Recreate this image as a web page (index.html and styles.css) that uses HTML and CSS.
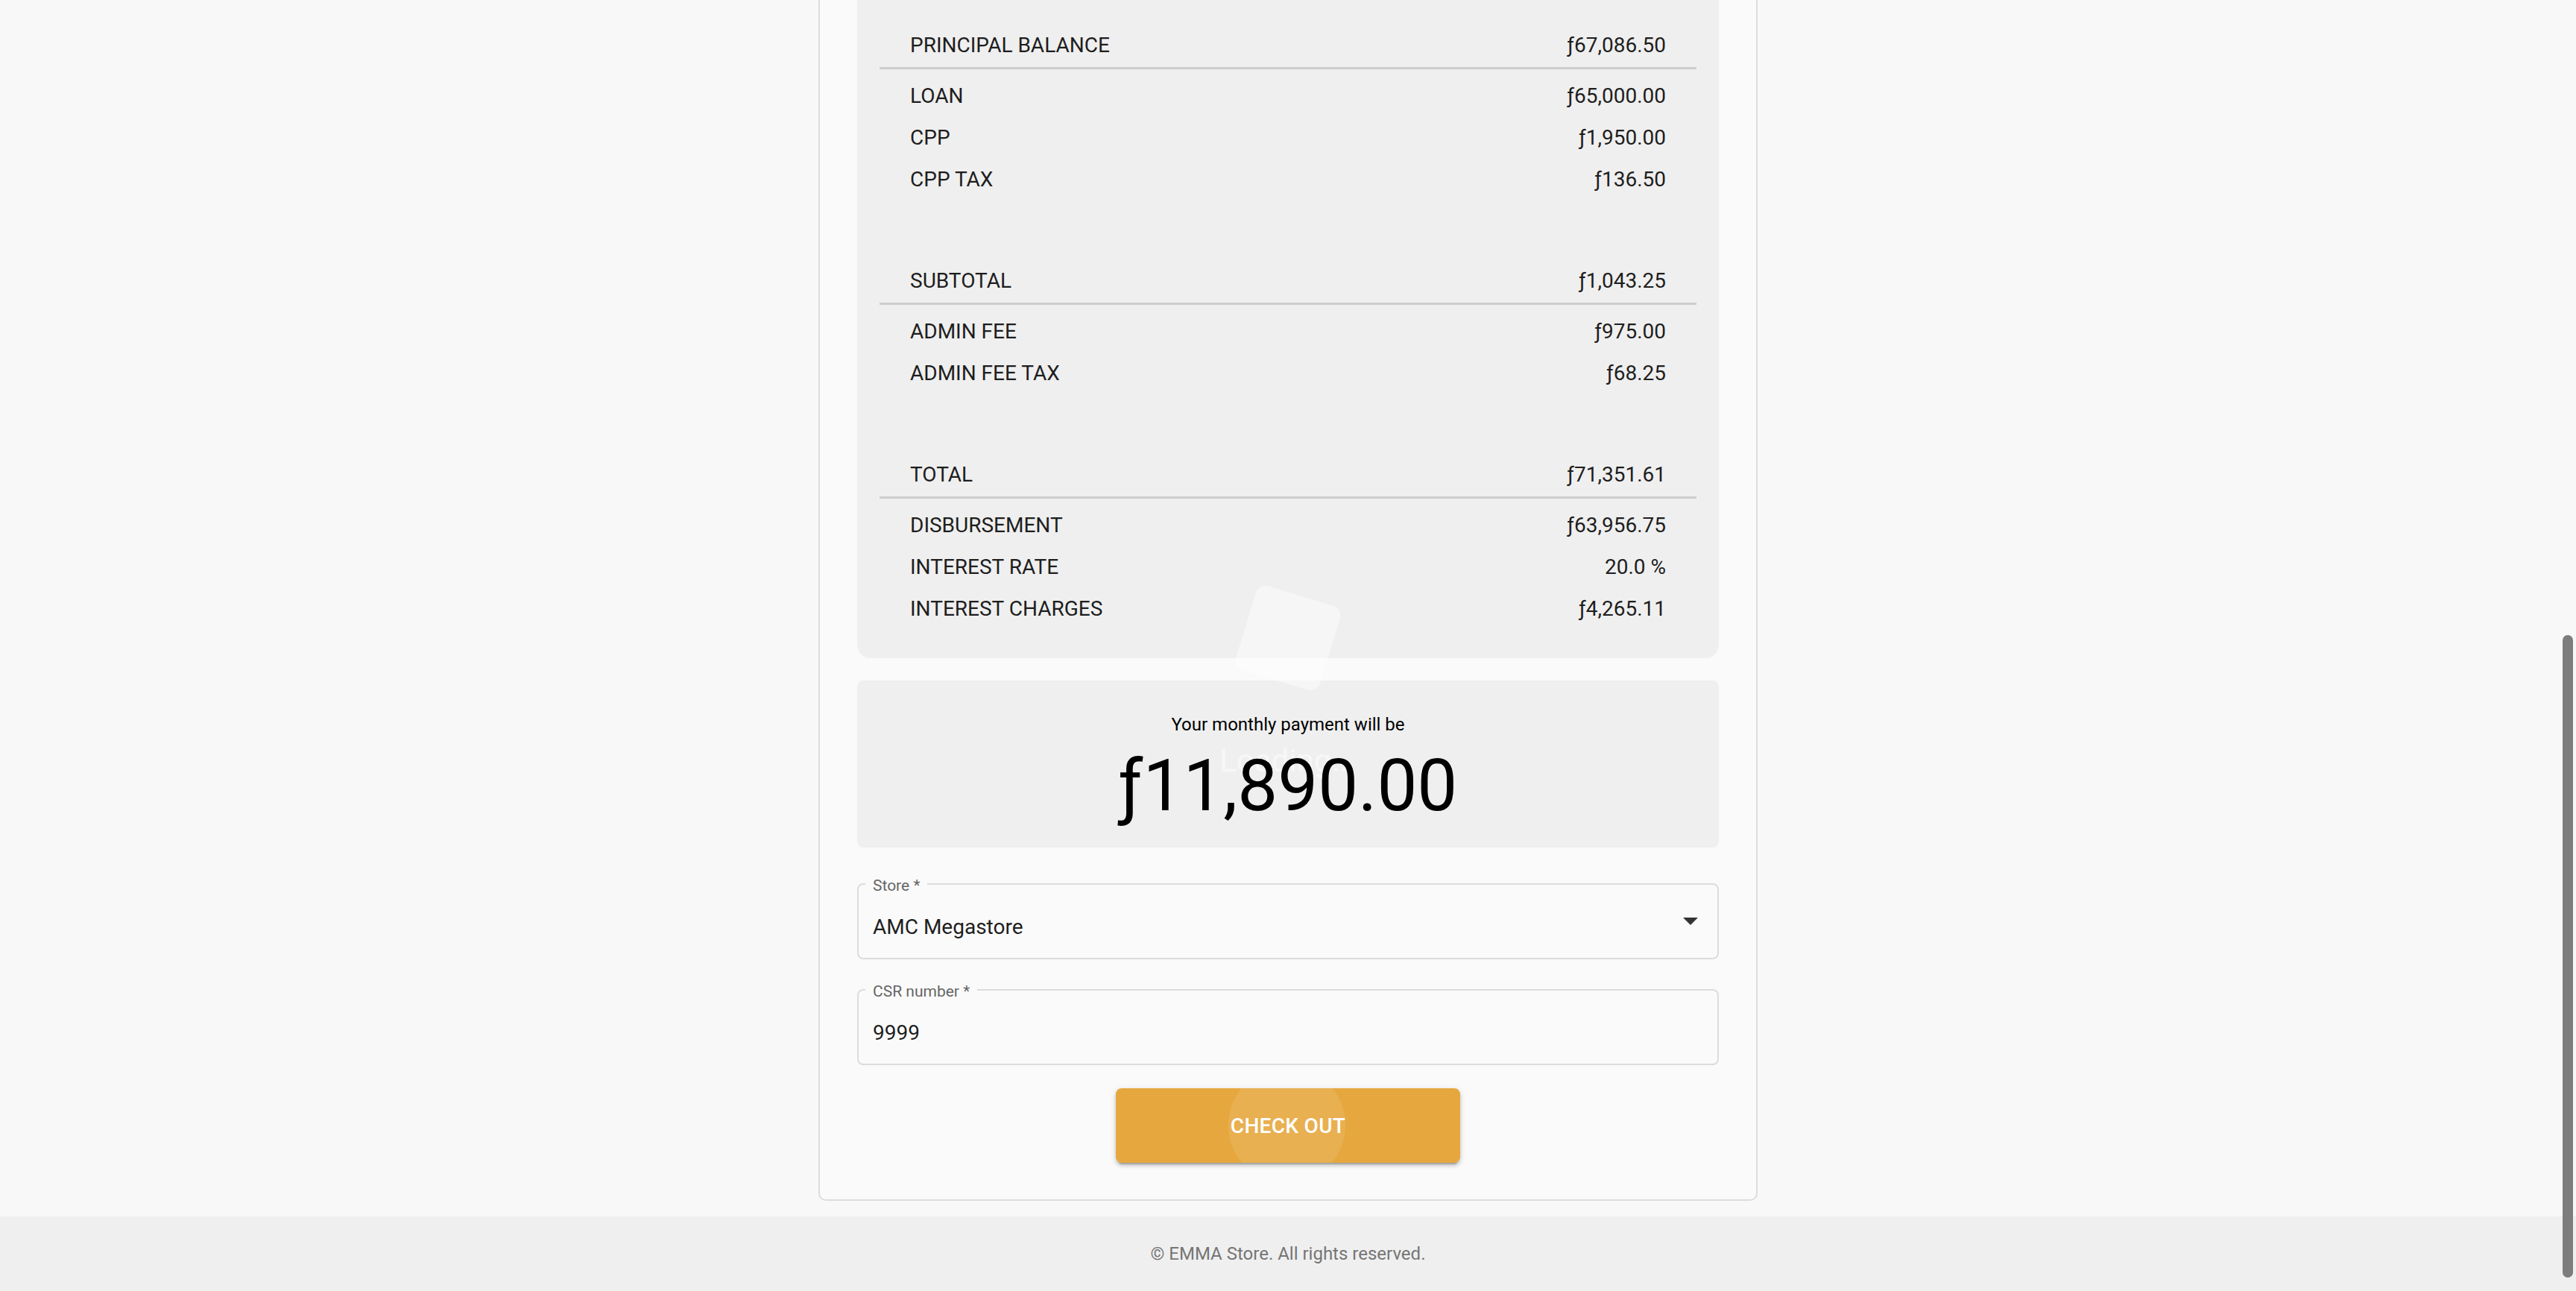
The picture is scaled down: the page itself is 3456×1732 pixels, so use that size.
FILE: index.html
```html
<!DOCTYPE html>
<html lang="en">
<head>
<meta charset="utf-8">
<title>EMMA Store - Checkout</title>
<link rel="stylesheet" href="styles.css">
</head>
<body>
<main class="main">
  <div class="container">
    <section class="breakdown">
      <div class="group">
        <div class="row head"><span>PRINCIPAL BALANCE</span><span>ƒ67,086.50</span></div>
        <div class="divider"></div>
        <div class="row"><span>LOAN</span><span>ƒ65,000.00</span></div>
        <div class="row"><span>CPP</span><span>ƒ1,950.00</span></div>
        <div class="row"><span>CPP TAX</span><span>ƒ136.50</span></div>
      </div>
      <div class="group">
        <div class="row head"><span>SUBTOTAL</span><span>ƒ1,043.25</span></div>
        <div class="divider"></div>
        <div class="row"><span>ADMIN FEE</span><span>ƒ975.00</span></div>
        <div class="row"><span>ADMIN FEE TAX</span><span>ƒ68.25</span></div>
      </div>
      <div class="group">
        <div class="row head"><span>TOTAL</span><span>ƒ71,351.61</span></div>
        <div class="divider"></div>
        <div class="row"><span>DISBURSEMENT</span><span>ƒ63,956.75</span></div>
        <div class="row"><span>INTEREST RATE</span><span>20.0 %</span></div>
        <div class="row"><span>INTEREST CHARGES</span><span>ƒ4,265.11</span></div>
      </div>
    </section>

    <div class="loader-square"></div>
    <div class="loader-text">Loading...</div>

    <section class="payment">
      <div class="payment-label">Your monthly payment will be</div>
      <div class="payment-amount">ƒ11,890.00</div>
    </section>

    <div class="field field-store">
      <span class="field-label">Store *</span>
      <span class="field-value">AMC Megastore</span>
      <svg class="field-arrow" width="20" height="10" viewBox="0 0 20 10"><path d="M0 0 L20 0 L10 10 Z" fill="#333"/></svg>
    </div>

    <div class="field field-csr">
      <span class="field-label">CSR number *</span>
      <span class="field-value">9999</span>
    </div>

    <button class="checkout" type="button"><span class="checkout-text">CHECK OUT</span></button>
  </div>
</main>
<footer class="footer">© EMMA Store. All rights reserved.</footer>
<div class="scroll-thumb"></div>
</body>
</html>
```

FILE: styles.css
```css
html, body {
  margin: 0;
  padding: 0;
}
body {
  width: 3456px;
  height: 1732px;
  overflow: hidden;
  background: #f8f8f8;
  font-family: Roboto, "Liberation Sans", sans-serif;
  color: #222;
  display: flex;
  flex-direction: column;
  position: relative;
}
.main {
  flex: 1 0 auto;
}
.container {
  position: relative;
  box-sizing: border-box;
  width: 1260px;
  margin: 0 auto;
  padding: 0 50px 49px;
  background: #fafafa;
  border: 2px solid #dcdcdc;
  border-top: none;
  border-radius: 0 0 10px 10px;
  display: flex;
  flex-direction: column;
}
.breakdown {
  background: #efefef;
  border-radius: 0 0 18px 18px;
  padding: 33px 30px 38px;
  display: flex;
  flex-direction: column;
  gap: 80px;
}
.group {
  display: flex;
  flex-direction: column;
}
.row {
  display: flex;
  justify-content: space-between;
  padding: 0 41px;
  font-size: 28px;
  line-height: 56px;
  color: #1e1e1e;
}
.divider {
  height: 3px;
  background: #cdcdcd;
  margin: 1px 0 8px;
}
.loader-square {
  position: absolute;
  left: 569px;
  top: 797px;
  width: 118px;
  height: 118px;
  border-radius: 14px;
  background: rgba(255, 255, 255, 0.45);
  transform: rotate(17deg);
}
.loader-text {
  position: absolute;
  left: 0;
  right: 0;
  top: 996px;
  text-align: center;
  font-size: 42px;
  line-height: 50px;
  color: rgba(255, 255, 255, 0.55);
}
.payment {
  margin-top: 30px;
  height: 224px;
  box-sizing: border-box;
  padding-top: 41px;
  background: #efefef;
  border-radius: 8px;
  text-align: center;
  color: #000;
}
.payment-label {
  font-size: 24px;
  line-height: 36px;
}
.payment-amount {
  position: relative;
  margin-top: 8px;
  font-size: 96px;
  line-height: 112px;
}
.field {
  position: relative;
  box-sizing: border-box;
  height: 102px;
  border: 2px solid #dcdcdc;
  border-radius: 8px;
  display: flex;
  align-items: center;
  padding: 0 26px 0 19px;
}
.field-store {
  margin-top: 48px;
}
.field-csr {
  margin-top: 40px;
}
.field-label {
  position: absolute;
  left: 9px;
  top: -11px;
  padding: 0 10px;
  background: #fafafa;
  font-size: 21px;
  line-height: 24px;
  color: #666;
}
.field-value {
  padding-top: 15px;
  font-size: 28px;
  line-height: 34px;
  color: #1e1e1e;
}
.field-arrow {
  margin-left: auto;
  display: block;
}
.checkout {
  position: relative;
  overflow: hidden;
  align-self: center;
  margin-top: 31px;
  width: 462px;
  height: 100px;
  border: none;
  border-radius: 8px;
  background: #e6a83e;
  color: #fff;
  font-family: Roboto, "Liberation Sans", sans-serif;
  font-size: 28px;
  font-weight: 500;
  letter-spacing: 0.3px;
  box-shadow: 0 6px 2px -4px rgba(0, 0, 0, 0.2), 0 4px 4px rgba(0, 0, 0, 0.14), 0 2px 10px rgba(0, 0, 0, 0.12);
  padding: 0;
}
.checkout::before {
  content: "";
  position: absolute;
  left: 50%;
  top: 50%;
  width: 157px;
  height: 157px;
  margin: -79px 0 0 -80px;
  border-radius: 50%;
  background: rgba(255, 255, 255, 0.1);
}
.checkout-text {
  position: relative;
}
.footer {
  margin-top: 21px;
  height: 100px;
  flex: 0 0 100px;
  background: #efefef;
  display: flex;
  align-items: center;
  justify-content: center;
  font-size: 24px;
  color: #757575;
}
.scroll-thumb {
  position: absolute;
  left: 3438px;
  top: 852px;
  width: 14px;
  height: 862px;
  border-radius: 7px;
  background: #7d7d7d;
}
```
